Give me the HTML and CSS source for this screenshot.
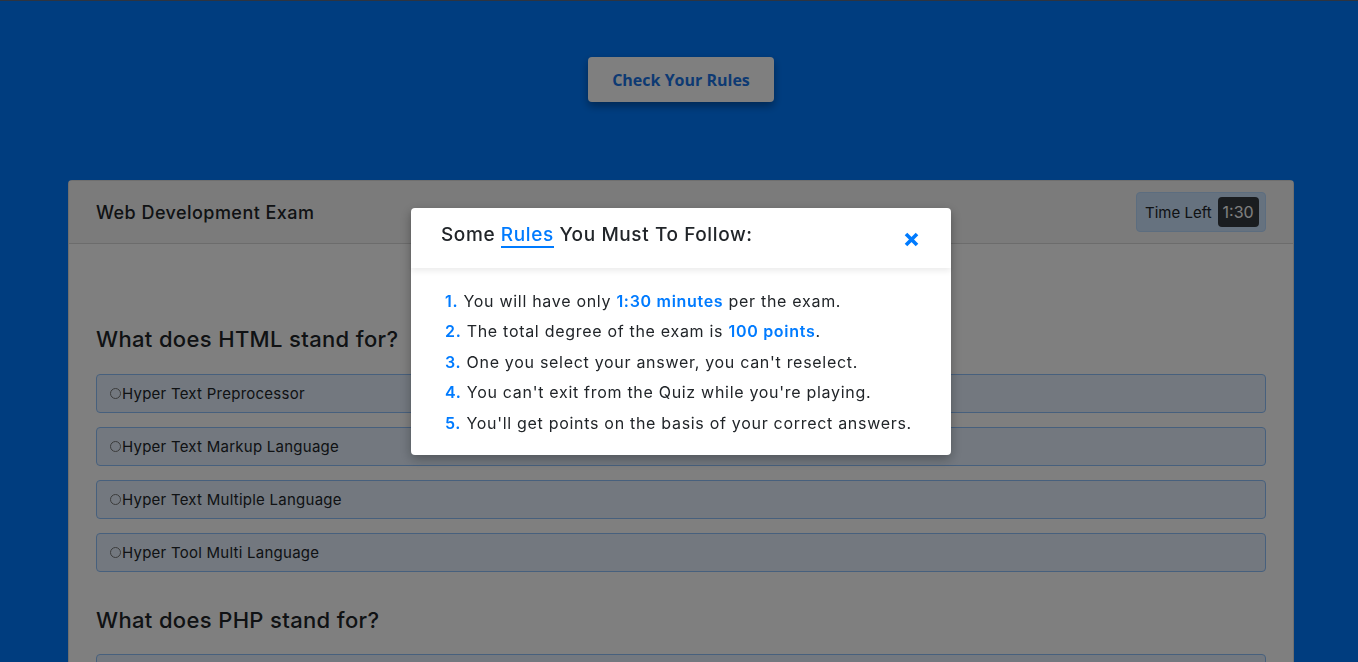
FILE: index.html
```html
<!DOCTYPE html>
<html lang="en">
<head>
<meta charset="utf-8">
<title>Web Development Exam</title>
<link rel="stylesheet" href="styles.css">
</head>
<body>
<div class="page">
  <header class="hero">
    <button class="rules-btn" type="button">Check Your Rules</button>
  </header>
  <main class="card">
    <div class="card-header">
      <h1 class="exam-title">Web Development Exam</h1>
      <div class="timer">Time Left <span class="badge">1:30</span></div>
    </div>
    <div class="card-body">
      <section class="question">
        <h2 class="q-title">What does HTML stand for?</h2>
        <ul class="options">
          <li class="option"><span class="radio"></span>Hyper Text Preprocessor</li>
          <li class="option"><span class="radio"></span>Hyper Text Markup Language</li>
          <li class="option"><span class="radio"></span>Hyper Text Multiple Language</li>
          <li class="option"><span class="radio"></span>Hyper Tool Multi Language</li>
        </ul>
      </section>
      <section class="question second">
        <h2 class="q-title">What does PHP stand for?</h2>
        <ul class="options">
          <li class="option"><span class="radio"></span>Hypertext Preprocessor</li>
          <li class="option"><span class="radio"></span>Personal Home Page</li>
        </ul>
      </section>
    </div>
  </main>
</div>

<div class="overlay"></div>

<div class="modal-wrap">
  <div class="modal">
    <div class="modal-header">
      <h3 class="modal-title">Some <span class="hl">Rules</span> You Must To Follow:</h3>
      <svg class="close" width="15" height="15" viewBox="0 0 15 15" aria-label="close">
        <path d="M2 2 L13 13 M13 2 L2 13" stroke="#007bff" stroke-width="3.6" stroke-linecap="butt" fill="none"/>
      </svg>
    </div>
    <ol class="rules">
      <li><b class="num">1.</b> You will have only <b class="blue">1:30 minutes</b> per the exam.</li>
      <li><b class="num">2.</b> The total degree of the exam is <b class="blue">100 points</b>.</li>
      <li><b class="num">3.</b> One you select your answer, you can't reselect.</li>
      <li><b class="num">4.</b> You can't exit from the Quiz while you're playing.</li>
      <li><b class="num">5.</b> You'll get points on the basis of your correct answers.</li>
    </ol>
  </div>
</div>
</body>
</html>
```

FILE: styles.css
```css
* { box-sizing: border-box; }
html, body { margin: 0; padding: 0; height: 100%; overflow: hidden; }
body {
  background: #007bff;
  font-family: Inter, "Noto Sans", sans-serif;
  color: #212529;
}
.page {
  padding-left: 4px;
}
.hero {
  height: 180px;
  display: flex;
  justify-content: center;
  padding-top: 57px;
  align-items: flex-start;
}
.rules-btn {
  width: 186px;
  height: 45px;
  border: 0;
  border-radius: 4px;
  background: #fff;
  color: #1a74e6;
  font-family: "Open Sans", sans-serif;
  font-weight: 700;
  font-size: 16px;
  box-shadow: 0 4px 8px rgba(0,0,0,0.35);
}
.card {
  width: 1226px;
  margin: 0 auto;
  background: #fff;
  border: 1px solid rgba(0,0,0,0.125);
  border-radius: 4px;
  min-height: 600px;
}
.card-header {
  height: 63px;
  background: #f7f7f7;
  border-bottom: 1px solid rgba(0,0,0,0.125);
  display: flex;
  align-items: center;
  justify-content: space-between;
  padding: 0 27px 0 27px;
}
.exam-title {
  margin: 0;
  font-size: 18px;
  font-weight: 500;
  letter-spacing: 0.45px;
  color: #212529;
}
.timer {
  height: 40px;
  width: 130px;
  background: #cce5ff;
  border: 1px solid #b8daff;
  border-radius: 4px;
  display: flex;
  align-items: center;
  padding: 0 8px;
  font-size: 15px;
  white-space: nowrap;
  color: #212529;
  gap: 6px;
}
.badge {
  background: #343a40;
  color: #fff;
  font-size: 16px;
  border-radius: 4px;
  height: 30px;
  padding: 0 5px;
  display: flex;
  align-items: center;
}
.card-body {
  padding: 82px 27px 0 27px;
}
.q-title {
  margin: 0 0 22px 0;
  font-size: 22px;
  font-weight: 500;
  letter-spacing: 0.35px;
  color: #212529;
}
.question.second { margin-top: 35px; }
.question.second .q-title { margin-bottom: 21px; }
.options {
  list-style: none;
  margin: 0;
  padding: 0;
  display: flex;
  flex-direction: column;
  gap: 14px;
}
.option {
  height: 39px;
  border: 1px solid #8fc0fb;
  background: #e6f1ff;
  border-radius: 4px;
  display: flex;
  align-items: center;
  padding-left: 13px;
  font-size: 15px;
  letter-spacing: 0.25px;
  color: #212529;
}
.radio {
  width: 11px;
  height: 11px;
  border: 1px solid #777;
  border-radius: 50%;
  margin-right: 1px;
  background: transparent;
}
.overlay {
  position: fixed;
  inset: 0;
  background: rgba(0,0,0,0.5);
  border-top: 1px solid #2e3440;
}
.modal-wrap {
  position: fixed;
  inset: 0;
  display: flex;
  align-items: center;
  justify-content: center;
  padding-left: 4px;
}
.modal {
  width: 540px;
  height: 247px;
  background: #fff;
  border-radius: 4px;
  box-shadow: 0 4px 12px rgba(0,0,0,0.3);
}
.modal-header {
  height: 60px;
  display: flex;
  align-items: center;
  justify-content: space-between;
  padding: 0 32px 6px 30px;
  box-shadow: 0 3px 6px rgba(0,0,0,0.08);
}
.modal-title {
  margin: 0;
  font-size: 19px;
  font-weight: 500;
  letter-spacing: 0.6px;
  color: #212529;
}
.hl {
  color: #007bff;
  border-bottom: 2px solid #007bff;
  padding-bottom: 0;
}
.close {
  display: block;
  margin-top: 9px;
}
.rules {
  list-style: none;
  margin: 0;
  padding: 18px 0 0 34px;
  font-size: 16px;
  letter-spacing: 0.7px;
  color: #212529;
}
.rules li {
  height: 30.5px;
  line-height: 30.5px;
}
.num { color: #007bff; font-weight: 600; }
.blue { color: #007bff; font-weight: 600; }
```
